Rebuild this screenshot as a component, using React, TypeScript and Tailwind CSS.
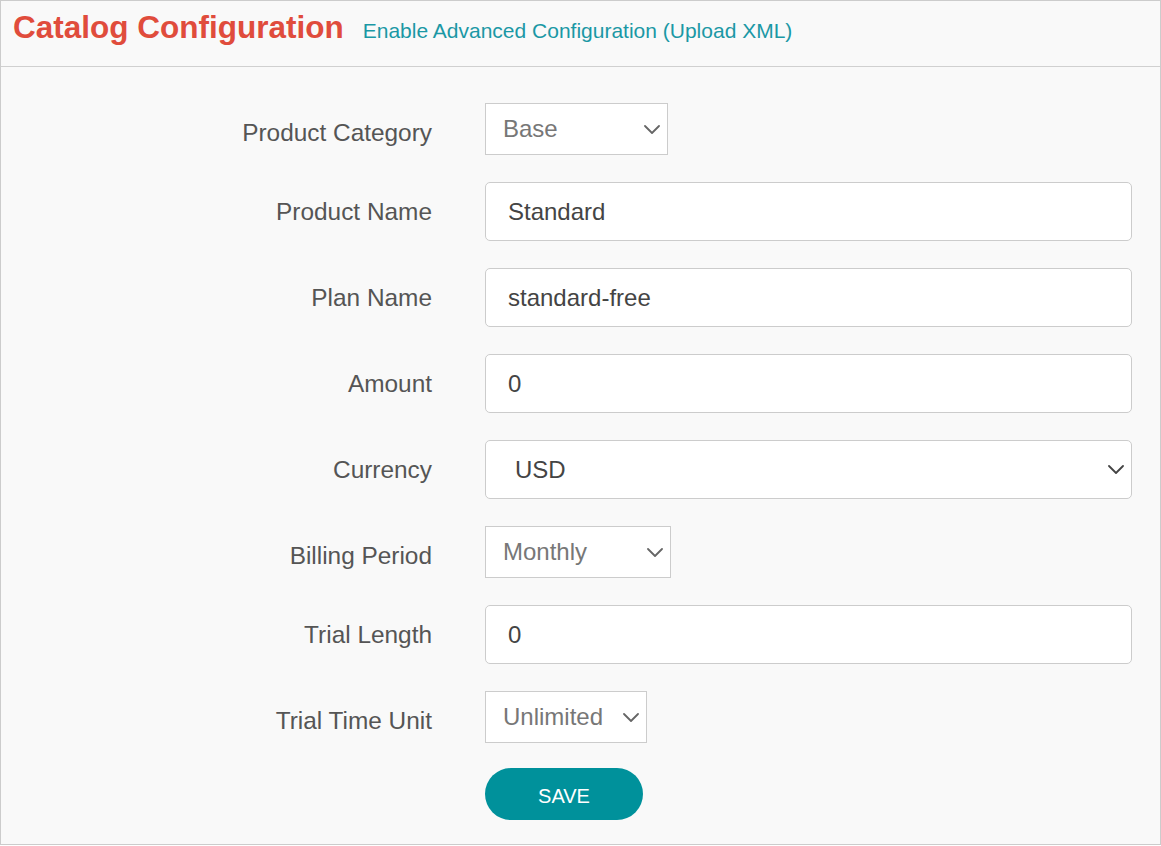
import React from "react";

const Chevron = ({ className }: { className?: string }) => (
  <svg width="16" height="9" viewBox="0 0 16 9" className={className} fill="none">
    <path d="M1 1l7 7 7-7" stroke="currentColor" strokeWidth="1.8" strokeLinecap="round" strokeLinejoin="round" />
  </svg>
);

const Label = ({ children }: { children: React.ReactNode }) => (
  <div className="w-[431px] shrink-0 pt-[16px] text-right text-[24.4px] leading-[28px] text-[#555555]">{children}</div>
);

const TextInput = ({ value }: { value: string }) => (
  <div className="ml-[53px] flex h-[59px] flex-1 items-center rounded-[5px] border border-[#cccccc] bg-white pl-[22px] text-[24px] text-[#444444]">
    {value}
  </div>
);

const SmallSelect = ({ value, width }: { value: string; width: string }) => (
  <div className={`ml-[53px] flex h-[52px] items-center justify-between border border-[#cccccc] bg-white pl-[17px] pr-[7px] text-[24px] text-[#777777] ${width}`}>
    <span>{value}</span>
    <Chevron className="text-[#666666]" />
  </div>
);

export default function App() {
  return (
    <div className="h-[845px] w-[1161px] border border-[#cccccc] bg-[#f9f9f9] font-['Liberation_Sans',Arial,sans-serif]">
      <div className="flex h-[66px] items-baseline border-b border-[#d0d0d0] pl-[12px] pt-[11px]">
        <h1 className="text-[31.5px] font-bold leading-[31px] text-[#e04c3c]">Catalog Configuration</h1>
        <a className="ml-[19px] text-[21px] leading-[31px] text-[#1b98a5]">Enable Advanced Configuration (Upload XML)</a>
      </div>
      <div className="flex flex-col gap-[27px] pr-[28px] pt-[36px]">
        <div className="flex items-start">
          <Label>Product Category</Label>
          <SmallSelect value="Base" width="w-[183px]" />
        </div>
        <div className="flex items-start">
          <Label>Product Name</Label>
          <TextInput value="Standard" />
        </div>
        <div className="flex items-start">
          <Label>Plan Name</Label>
          <TextInput value="standard-free" />
        </div>
        <div className="flex items-start">
          <Label>Amount</Label>
          <TextInput value="0" />
        </div>
        <div className="flex items-start">
          <Label>Currency</Label>
          <div className="ml-[53px] flex h-[59px] flex-1 items-center justify-between rounded-[5px] border border-[#cccccc] bg-white pl-[29px] pr-[7px] text-[24px] text-[#444444]">
            <span>USD</span>
            <Chevron className="text-[#444444]" />
          </div>
        </div>
        <div className="flex items-start">
          <Label>Billing Period</Label>
          <SmallSelect value="Monthly" width="w-[186px]" />
        </div>
        <div className="flex items-start">
          <Label>Trial Length</Label>
          <TextInput value="0" />
        </div>
        <div className="flex items-start">
          <Label>Trial Time Unit</Label>
          <SmallSelect value="Unlimited" width="w-[162px]" />
        </div>
        <div className="-mt-[2px] flex items-start">
          <div className="w-[431px] shrink-0" />
          <button className="ml-[53px] h-[52px] w-[158px] rounded-full bg-[#00919b] pt-[4px] text-[20px] text-white">SAVE</button>
        </div>
      </div>
    </div>
  );
}
